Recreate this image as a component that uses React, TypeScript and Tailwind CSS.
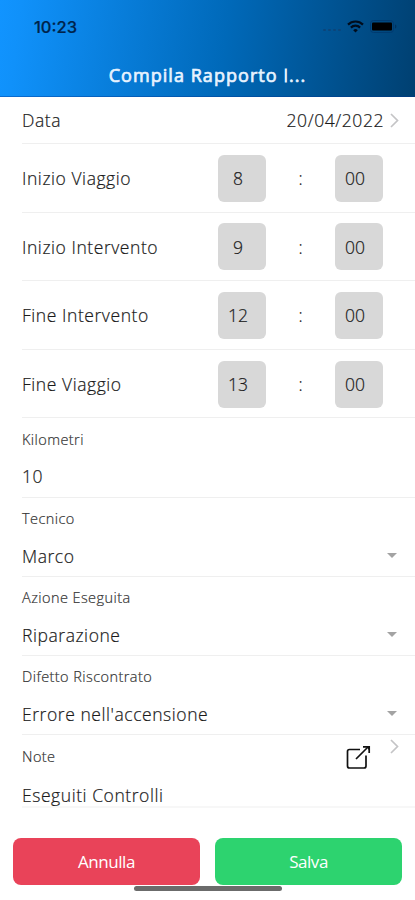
import { useState } from "react";

const times = [
    { label: "Inizio Viaggio", hour: "8", minute: "00" },
    { label: "Inizio Intervento", hour: "9", minute: "00" },
    { label: "Fine Intervento", hour: "12", minute: "00" },
    { label: "Fine Viaggio", hour: "13", minute: "00" },
];

function StatusIcons() {
    return (
        <div className="-mt-0.5 flex items-center">
            <svg width="20" height="12" viewBox="0 0 20 12" fill="#0b4479">
                <rect x="0" y="9" width="3" height="2" rx="1" />
                <rect x="5" y="9" width="3" height="2" rx="1" />
                <rect x="10" y="9" width="3" height="2" rx="1" />
                <rect x="15" y="9" width="3" height="2" rx="1" />
            </svg>
            <svg className="ml-1" width="17" height="13" viewBox="0 0 17 13" fill="none" stroke="#000d1c" strokeWidth="2.2">
                <path d="M1 4.6a10.6 10.6 0 0 1 15 0" />
                <path d="M3.9 7.6a6.5 6.5 0 0 1 9.2 0" />
                <path d="M8.5 12.6 6.2 10.2a3.3 3.3 0 0 1 4.6 0z" fill="#000d1c" stroke="none" />
            </svg>
            <svg className="ml-1.5" width="27" height="13" viewBox="0 0 27 13">
                <rect x="0.5" y="0.5" width="23" height="12" rx="3" fill="none" stroke="#003b70" />
                <rect x="2" y="2.5" width="20" height="8" rx="1" fill="#000" />
                <path d="M25 4.5v4c1-.4 1.4-1.1 1.4-2s-.4-1.6-1.4-2z" fill="#003360" />
            </svg>
        </div>
    )
}

function Chevron() {
    return (
        <svg width="9" height="15" viewBox="0 0 9 15" fill="none" stroke="#c4c4c6" strokeWidth="1.7">
            <path d="M1 1l6.5 6.5L1 14" />
        </svg>
    )
}

function Caret() {
    return (
        <svg width="10" height="5" viewBox="0 0 10 5" fill="#a3a3a3">
            <path d="M0 0h10L5 5z" />
        </svg>
    )
}

function TimeBox({ value }: { value: string }) {
    return (
        <span className="w-12 h-[47px] pr-[9px] rounded-md bg-[#d8d8d8] flex items-center justify-center tracking-normal">{value}</span>
    )
}

function TimeRow({ label, hour, minute }: { label: string; hour: string; minute: string }) {
    return (
        <div className="ml-[22px] h-[68.6px] pt-px flex items-center border-b border-[#efefef]">
            <span className="w-[196.4px]">{label}</span>
            <TimeBox value={hour} />
            <span className="w-[69px] text-center">:</span>
            <TimeBox value={minute} />
        </div>
    )
}

function Field({ label, value, select }: { label: string; value: string; select?: boolean }) {
    return (
        <div className="ml-[22px] h-[79.2px] pt-[11.4px] border-b border-[#efefef]">
            <div className="text-[14.5px] tracking-[0.43px] leading-5 text-[#333]">{label}</div>
            <div className="mt-[14.6px] pr-[18px] flex items-center justify-between leading-6">
                <span>{value}</span>
                {select && <Caret />}
            </div>
        </div>
    )
}

export default function App() {
    const [note] = useState("Eseguiti Controlli");

    return (
        <div className="w-full h-[900px] overflow-hidden bg-white font-['Open_Sans',sans-serif] font-light text-[17.5px] tracking-[0.56px] text-[#1a1a1a] [-webkit-text-stroke:0.2px]">
            <header className="h-[97px] border-b border-[#00308a]/40 bg-[linear-gradient(97deg,#1194ff_0%,#1091fa_5%,#0069b9_54%,#004071_100%)]">
                <div className="h-[54px] pl-[34px] pr-[18px] flex items-center justify-between">
                    <span className="font-['Inter',sans-serif] font-medium text-[16.5px] tracking-normal text-[#00234a]">10:23</span>
                    <StatusIcons />
                </div>
                <h1 className="h-[43px] leading-[43px] text-center text-[18px] font-normal tracking-[1.05px] text-[#e8f3ff] [-webkit-text-stroke:0.7px_#e8f3ff]">
                    Compila Rapporto <span className="font-light [-webkit-text-stroke:1px_#e8f3ff]">I</span>...
                </h1>
            </header>

            <div className="ml-[22px] pr-4 h-[47px] flex items-center border-b border-[#efefef]">
                <span className="flex-1 pt-px">Data</span>
                <span className="mr-1.5 pt-px">20/04/2022</span>
                <Chevron />
            </div>

            {times.map((t) => <TimeRow key={t.label} {...t} />)}

            <Field label="Kilometri" value="10" />
            <Field label="Tecnico" value="Marco" select />
            <Field label="Azione Eseguita" value="Riparazione" select />
            <Field label="Difetto Riscontrato" value="Errore nell'accensione" select />

            <div className="ml-[22px] pr-4 h-[73px] border-b-2 border-[#f7f7f7]">
                <div className="h-12 flex">
                    <span className="flex-1 pt-[11.5px] text-[14.5px] tracking-[0.43px] leading-5 text-[#333]">Note</span>
                    <svg className="mt-[9px] mr-[19px]" width="26" height="26" viewBox="0 0 26 26" fill="none" stroke="#111" strokeWidth="1.7">
                        <path d="M15 5.5H4.5a2 2 0 0 0-2 2v14.5a2 2 0 0 0 2 2h14.5a2 2 0 0 0 2-2V11.5M11 15L22 4" />
                        <path d="M18 2.8h6.2v6.2" />
                        <path d="M20 2h5v5z" fill="#111" stroke="none" />
                    </svg>
                    <div className="pt-1"><Chevron /></div>
                </div>
                <div className="leading-6">{note}</div>
            </div>

            <div className="mt-[30px] px-[13px] flex gap-[15px] text-white font-normal text-[17px] [-webkit-text-stroke:0]">
                <button className="flex-1 h-[47px] rounded-lg bg-[#e94359] tracking-[-0.45px]">Annulla</button>
                <button className="flex-1 h-[47px] rounded-lg bg-[#2dd36f] tracking-[-0.45px]">Salva</button>
            </div>
            <div className="mt-px ml-[134px] w-[148px] h-[5px] rounded-full bg-[#6b6b6b]" />
        </div>
    )
}
